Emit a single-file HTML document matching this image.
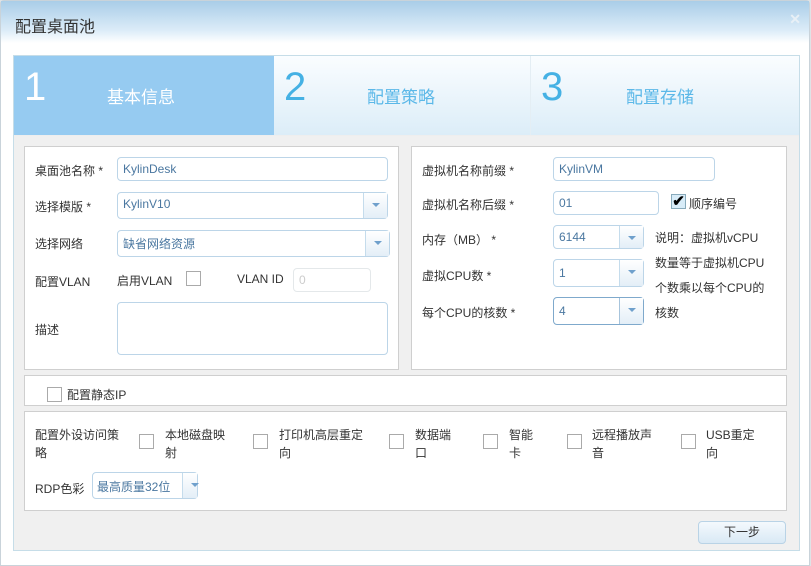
<!DOCTYPE html>
<html><head><meta charset="utf-8"><style>
*{box-sizing:border-box;margin:0;padding:0}
body{width:811px;height:566px;overflow:hidden;font-family:"Liberation Sans","Noto Sans CJK SC",sans-serif;font-size:12px;color:#333;background:#dfe3e6;position:relative}
.dlg{position:absolute;left:0;top:0;width:810px;height:566px;background:#fff;border:1px solid #c9d3da;border-radius:4px 4px 0 0}
.title{position:absolute;left:0;top:0;width:100%;height:42px;background:linear-gradient(#a9cde8,#dcecf8 70%,#fff);font-size:16px;color:#333;padding:12px 0 0 14px}
.x{position:absolute;right:8px;top:10px;color:#e8f0f6;font-size:14px;font-weight:bold}
.inner{position:absolute;left:12px;top:54px;width:787px;height:496px;background:#f0f0f0;border:1px solid #c6dde8}
.a{position:absolute}
.step{position:absolute;top:0;height:79px;background:linear-gradient(#fafdff,#dcedf8)}
.step .n{position:absolute;left:10px;top:9px;font-size:40px;color:#45b1e4;font-weight:300}
.step .t{position:absolute;top:27px;font-size:17px;color:#5bb8e8}
.box{position:absolute;background:#fff;border:1px solid #cfcfcf}
.lbl{position:absolute;font-size:12px;color:#333}
.inp{position:absolute;height:24px;border:1px solid #bcd5e8;border-radius:4px;background:#fff;color:#4a77a0;font-size:12px;padding:4px 5px;white-space:nowrap}
.dd{position:absolute;right:0;top:0;bottom:0;width:24px;border-left:1px solid #c5dcec;background:linear-gradient(#fff,#e3eef7)}
.dd:after{content:"";position:absolute;left:8px;top:10px;border:4px solid transparent;border-top:4px solid #6fa0cc;border-bottom:0}
.cb{position:absolute;width:15px;height:15px;border:1px solid #aaa;background:#fff}
</style></head><body>
<div class="dlg">
<div class="title">配置桌面池<span class="x">✕</span></div>
<div class="inner">
 <div class="a" style="left:0;top:0;width:785px;height:80px;background:#eee"></div>
 <div class="step" style="left:0;width:260px;background:#96cbf1"><span class="n" style="color:#fff">1</span><span class="t" style="left:93px;color:#fff">基本信息</span></div>
 <div class="step" style="left:260px;width:257px;border-right:1px solid #e4eef4"><span class="n">2</span><span class="t" style="left:93px">配置策略</span></div>
 <div class="step" style="left:517px;width:268px"><span class="n">3</span><span class="t" style="left:95px">配置存储</span></div>

 <div class="box" style="left:10px;top:90px;width:375px;height:224px">
  <span class="lbl" style="left:10px;top:15px">桌面池名称 *</span>
  <div class="inp" style="left:92px;top:10px;width:271px">KylinDesk</div>
  <span class="lbl" style="left:10px;top:51px">选择模版 *</span>
  <div class="inp" style="left:92px;top:45px;width:271px;height:27px">KylinV10<div class="dd"></div></div>
  <span class="lbl" style="left:10px;top:88px">选择网络</span>
  <div class="inp" style="left:92px;top:83px;width:273px;height:27px">缺省网络资源<div class="dd"></div></div>
  <span class="lbl" style="left:10px;top:126px">配置VLAN</span>
  <span class="lbl" style="left:92px;top:125px">启用VLAN</span>
  <div class="cb" style="left:161px;top:124px"></div>
  <span class="lbl" style="left:212px;top:125px">VLAN ID</span>
  <div class="inp" style="left:268px;top:121px;width:78px;border-color:#e4e8ea;color:#ccc">0</div>
  <span class="lbl" style="left:10px;top:174px">描述</span>
  <div class="inp" style="left:92px;top:155px;width:271px;height:53px"></div>
 </div>

 <div class="box" style="left:397px;top:90px;width:376px;height:224px">
  <span class="lbl" style="left:10px;top:15px">虚拟机名称前缀 *</span>
  <div class="inp" style="left:141px;top:10px;width:162px">KylinVM</div>
  <span class="lbl" style="left:10px;top:49px">虚拟机名称后缀 *</span>
  <div class="inp" style="left:141px;top:44px;width:106px">01</div>
  <div class="a" style="left:259px;top:47px;width:15px;height:15px;border:1px solid #8ab;background:#d8ecf8;font-size:15px;line-height:13px;font-weight:bold;color:#000;text-align:center">✔</div>
  <span class="lbl" style="left:277px;top:48px">顺序编号</span>
  <span class="lbl" style="left:10px;top:84px">内存（MB） *</span>
  <div class="inp" style="left:141px;top:78px;width:91px">6144<div class="dd"></div></div>
  <span class="lbl" style="left:10px;top:120px">虚拟CPU数 *</span>
  <div class="inp" style="left:141px;top:112px;width:91px;height:28px;padding-top:6px">1<div class="dd"></div></div>
  <span class="lbl" style="left:10px;top:157px">每个CPU的核数 *</span>
  <div class="inp" style="left:141px;top:150px;width:91px;height:28px;padding-top:6px;border-color:#7fa9cc">4<div class="dd" style="border-left-color:#a7c4dc"></div></div>
  <div class="lbl" style="left:243px;top:79px;line-height:25px;width:120px">说明：虚拟机vCPU<br>数量等于虚拟机CPU<br>个数乘以每个CPU的<br>核数</div>
 </div>

 <div class="box" style="left:10px;top:319px;width:763px;height:31px">
  <div class="cb" style="left:22px;top:11px"></div>
  <span class="lbl" style="left:42px;top:10px">配置静态IP</span>
 </div>

 <div class="box" style="left:10px;top:355px;width:763px;height:100px">
  <div class="lbl" style="left:10px;top:14px;line-height:18px;width:86px">配置外设访问策略</div>
  <div class="cb" style="left:114px;top:22px"></div><div class="lbl" style="left:140px;top:14px;line-height:18px;width:62px">本地磁盘映射</div>
  <div class="cb" style="left:228px;top:22px"></div><div class="lbl" style="left:254px;top:14px;line-height:18px;width:86px">打印机高层重定向</div>
  <div class="cb" style="left:364px;top:22px"></div><div class="lbl" style="left:390px;top:14px;line-height:18px;width:38px">数据端口</div>
  <div class="cb" style="left:458px;top:22px"></div><div class="lbl" style="left:484px;top:14px;line-height:18px;width:26px">智能卡</div>
  <div class="cb" style="left:542px;top:22px"></div><div class="lbl" style="left:567px;top:14px;line-height:18px;width:62px">远程播放声音</div>
  <div class="cb" style="left:656px;top:22px"></div><div class="lbl" style="left:681px;top:14px;line-height:18px;width:50px">USB重定向</div>
  <span class="lbl" style="left:10px;top:68px">RDP色彩</span>
  <div class="inp" style="left:67px;top:60px;width:106px;height:27px;padding:5px 4px">最高质量32位<div class="dd" style="width:15px"></div></div>
 </div>

 <div class="a" style="left:684px;top:465px;width:88px;height:23px;border:1px solid #b9d3e6;border-radius:4px;background:linear-gradient(#f4f9fd,#d9e9f5);text-align:center;line-height:21px;color:#333">下一步</div>
</div>
</div>
</body></html>
